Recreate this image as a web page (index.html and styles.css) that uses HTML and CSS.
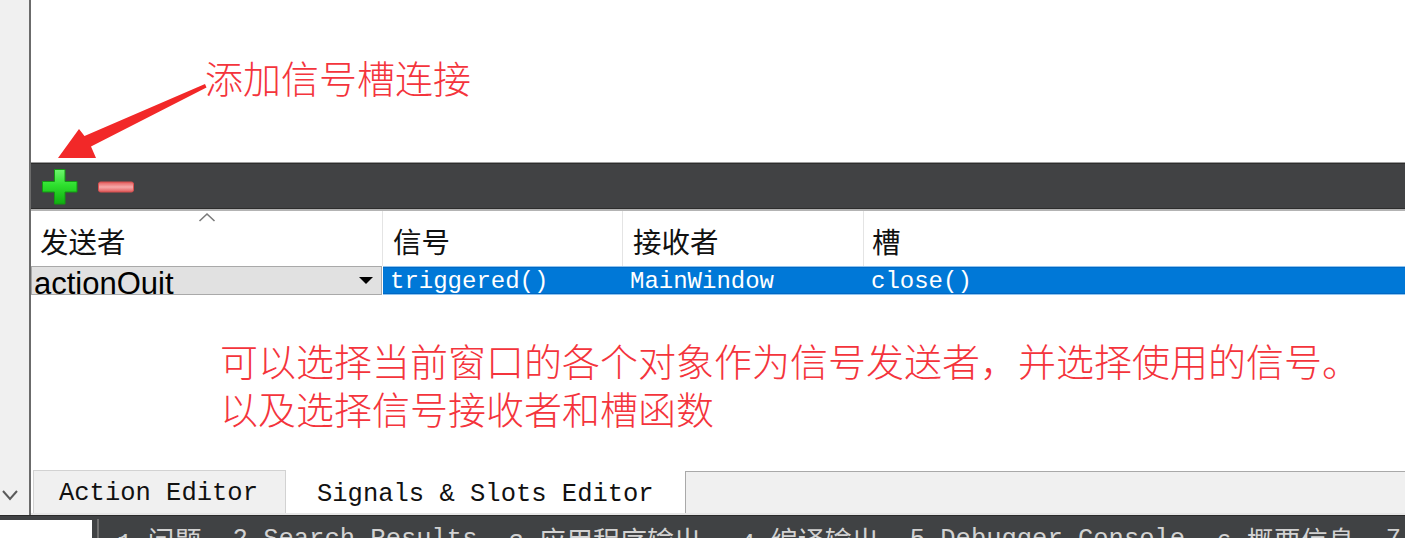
FILE: index.html
```html
<!DOCTYPE html>
<html lang="zh-CN">
<head>
<meta charset="utf-8">
<title>Signals &amp; Slots Editor</title>
<link rel="stylesheet" href="styles.css">
</head>
<body>
<div class="screen">
  <div class="main">
    <aside class="side">
      <svg class="chev" width="18" height="12" viewBox="0 0 18 12"><polyline points="2,2 9,10 16,2" fill="none" stroke="#5a5a5a" stroke-width="2"/></svg>
    </aside>
    <section class="content">
      <div class="canvas">
        <div class="note">添加信号槽连接</div>
      </div>
      <div class="toolbar">
        <svg class="ico-plus" width="36" height="36" viewBox="0 0 36 36">
          <defs>
            <linearGradient id="gp" x1="0" y1="0" x2="0" y2="1">
              <stop offset="0" stop-color="#6ff56f"/>
              <stop offset="0.45" stop-color="#2ee02e"/>
              <stop offset="1" stop-color="#0fae0f"/>
            </linearGradient>
          </defs>
          <path d="M12.5 0.5 H23 V12.5 H35 V23 H23 V35 H12.5 V23 H0.5 V12.5 H12.5 Z" fill="url(#gp)" stroke="#129a12" stroke-width="1" stroke-linejoin="round"/>
        </svg>
        <svg class="ico-minus" width="36" height="12" viewBox="0 0 36 12">
          <defs>
            <linearGradient id="gm" x1="0" y1="0" x2="0" y2="1">
              <stop offset="0" stop-color="#e35d5d"/>
              <stop offset="0.5" stop-color="#f6a9a9"/>
              <stop offset="1" stop-color="#e05a5a"/>
            </linearGradient>
          </defs>
          <rect x="0.5" y="1" width="35" height="10" rx="2" fill="url(#gm)" stroke="#d65050" stroke-width="1"/>
        </svg>
      </div>
      <div class="thead">
        <div class="th th-sort">发送者
          <svg class="caret" width="18" height="10" viewBox="0 0 18 10"><polyline points="1.5,9 9,2 16.5,9" fill="none" stroke="#7a7a7a" stroke-width="1.6"/></svg>
        </div>
        <div class="th">信号</div>
        <div class="th">接收者</div>
        <div class="th th-last">槽</div>
      </div>
      <div class="trow">
        <div class="combo">
          <span class="combo-text">actionQuit</span>
          <svg class="drop" width="14" height="7" viewBox="0 0 14 7"><polygon points="0,0 14,0 7,7" fill="#000"/></svg>
        </div>
        <div class="sel">
          <div class="td">triggered()</div>
          <div class="td">MainWindow</div>
          <div class="td">close()</div>
        </div>
      </div>
      <div class="empty">
        <div class="note note2">可以选择当前窗口的各个对象作为信号发送者，并选择使用的信号。</div>
        <div class="note note2">以及选择信号接收者和槽函数</div>
      </div>
      <div class="tabs">
        <div class="tab tab-off">Action Editor</div>
        <div class="tab tab-on">Signals &amp; Slots Editor</div>
        <div class="tab-rest"></div>
      </div>
    </section>
  </div>
  <footer class="status">
    <div class="search"></div>
    <div class="sep"></div>
    <div class="items">
      <span class="si">1 <span class="cj">问题</span></span>
      <span class="si">2 Search Results</span>
      <span class="si si-wide">3 <span class="cj">应用程序输出</span></span>
      <span class="si">4 <span class="cj">编译输出</span></span>
      <span class="si">5 Debugger Console</span>
      <span class="si">6 <span class="cj">概要信息</span></span>
      <span class="si">7 Test Results</span>
    </div>
  </footer>
  <svg class="arrow" width="240" height="170" viewBox="0 0 240 170">
    <polygon points="58,158 79,129 84.5,136 205,84 206.5,87.5 91,146.5 96,158" fill="#f22828"/>
  </svg>
</div>
</body>
</html>
```
FILE: styles.css
```css
html, body {
  margin: 0;
  padding: 0;
  background: #fff;
}

.screen {
  position: relative;
  width: 1405px;
  height: 538px;
  overflow: hidden;
  background: #fff;
  font-family: "Liberation Sans", "Noto Sans CJK SC", sans-serif;
}

.main {
  display: flex;
  height: 515px;
}

.side {
  width: 29px;
  flex: none;
  background: #f0f0f0;
  border-right: 2px solid #6b6b6b;
  display: flex;
  flex-direction: column;
  justify-content: flex-end;
  align-items: flex-start;
  padding-bottom: 14px;
  box-sizing: content-box;
}

.chev {
  display: block;
  margin-left: 1px;
}

.content {
  flex: 1;
  min-width: 0;
  display: flex;
  flex-direction: column;
}

.canvas {
  height: 162px;
  flex: none;
  box-sizing: border-box;
  padding: 58px 0 0 174px;
}

.note {
  color: #f4343c;
  font-family: "Noto Sans CJK SC", sans-serif;
  font-weight: 300;
  font-size: 38px;
  line-height: 38px;
  white-space: nowrap;
}

.toolbar {
  height: 49px;
  flex: none;
  box-sizing: border-box;
  background: #414244;
  border-top: 1px solid #9c9c9c;
  border-bottom: 2px solid #b3b3b3;
  box-shadow: inset 0 1px 0 #2d2d2d, inset 0 -1px 0 #2d2d2d;
  display: flex;
  align-items: center;
  padding-left: 11px;
  gap: 20px;
}

.ico-plus, .ico-minus {
  display: block;
  margin-top: 2px;
}

.thead {
  height: 55px;
  flex: none;
  display: grid;
  grid-template-columns: 352px 240px 241px 1fr;
}

.th {
  position: relative;
  border-right: 1px solid #e4e4e4;
  display: flex;
  align-items: center;
  padding: 3px 0 0 9px;
  font-family: "Noto Sans CJK SC", sans-serif;
  font-size: 28.5px;
  color: #111;
}

.th + .th {
  padding-left: 10px;
}

.th-last {
  border-right: none;
  padding-left: 8px !important;
}

.caret {
  position: absolute;
  top: 1px;
  left: 50%;
  margin-left: -9px;
}

.trow {
  height: 29px;
  flex: none;
  display: flex;
}

.combo {
  width: 351px;
  flex: none;
  box-sizing: border-box;
  margin-right: 1px;
  background: #e1e1e1;
  border: 1px solid #a9a9a9;
  display: flex;
  justify-content: space-between;
  align-items: flex-start;
  overflow: hidden;
  padding-left: 2px;
}

.combo-text {
  font-family: "Liberation Sans", sans-serif;
  font-size: 31px;
  line-height: 34px;
  color: #000;
  white-space: nowrap;
}

.drop {
  align-self: center;
  margin-right: 8px;
  display: block;
}

.sel {
  flex: 1;
  display: grid;
  grid-template-columns: 240px 241px 1fr;
  background: #0078d7;
  border-top: 1px solid #8fc3ee;
  border-bottom: 1px solid #8fc3ee;
  box-shadow: inset 0 1px 0 #0068c4, inset 0 -1px 0 #0068c4;
}

.td {
  padding: 2px 0 0 7px;
  font-family: "Liberation Mono", monospace;
  font-size: 24px;
  line-height: 25px;
  color: #fff;
  white-space: nowrap;
}

.empty {
  flex: 1;
  box-sizing: border-box;
  padding: 41px 0 0 189px;
}

.note2 {
  height: 48px;
  line-height: 48px;
}

.tabs {
  height: 45px;
  flex: none;
  display: flex;
  box-sizing: border-box;
  border-bottom: 2px solid #e6e6e6;
}

.tab {
  box-sizing: border-box;
  font-family: "Liberation Mono", monospace;
  font-size: 25.5px;
  line-height: 40px;
  color: #111;
  white-space: nowrap;
}

.tab-off {
  width: 253px;
  margin-left: 2px;
  background: #f0f0f0;
  border: 1px solid #d2d2d2;
  border-bottom: none;
  padding: 3px 0 0 25px;
}

.tab-on {
  width: 399px;
  background: #fff;
  padding: 5px 0 0 31px;
}

.tab-rest {
  flex: 1;
  margin-top: 1px;
  background: #f0f0f0;
  border-top: 1px solid #a9a9a9;
  border-left: 1px solid #a9a9a9;
}

.status {
  height: 23px;
  background: #404244;
  border-top: 1px solid #2a2a2a;
  box-sizing: border-box;
  display: flex;
  align-items: flex-start;
  overflow: hidden;
}

.search {
  width: 92px;
  height: 18px;
  margin-top: 4px;
  background: #fff;
  flex: none;
}

.sep {
  width: 2px;
  height: 20px;
  margin: 3px 0 0 5px;
  background: #6f6f6f;
  flex: none;
}

.items {
  display: flex;
  gap: 31px;
  margin-left: 18px;
  padding-top: 11px;
  white-space: pre;
  font-family: "Liberation Mono", "Noto Sans CJK SC", monospace;
  font-size: 25.5px;
  line-height: 26px;
  color: #d2d2d2;
}

.si {
  flex: none;
}

.si-wide {
  margin-right: 8px;
}

.cj {
  font-family: "Noto Sans CJK SC", sans-serif;
  font-size: 27px;
}

.arrow {
  position: absolute;
  left: 0;
  top: 0;
  pointer-events: none;
}
```
